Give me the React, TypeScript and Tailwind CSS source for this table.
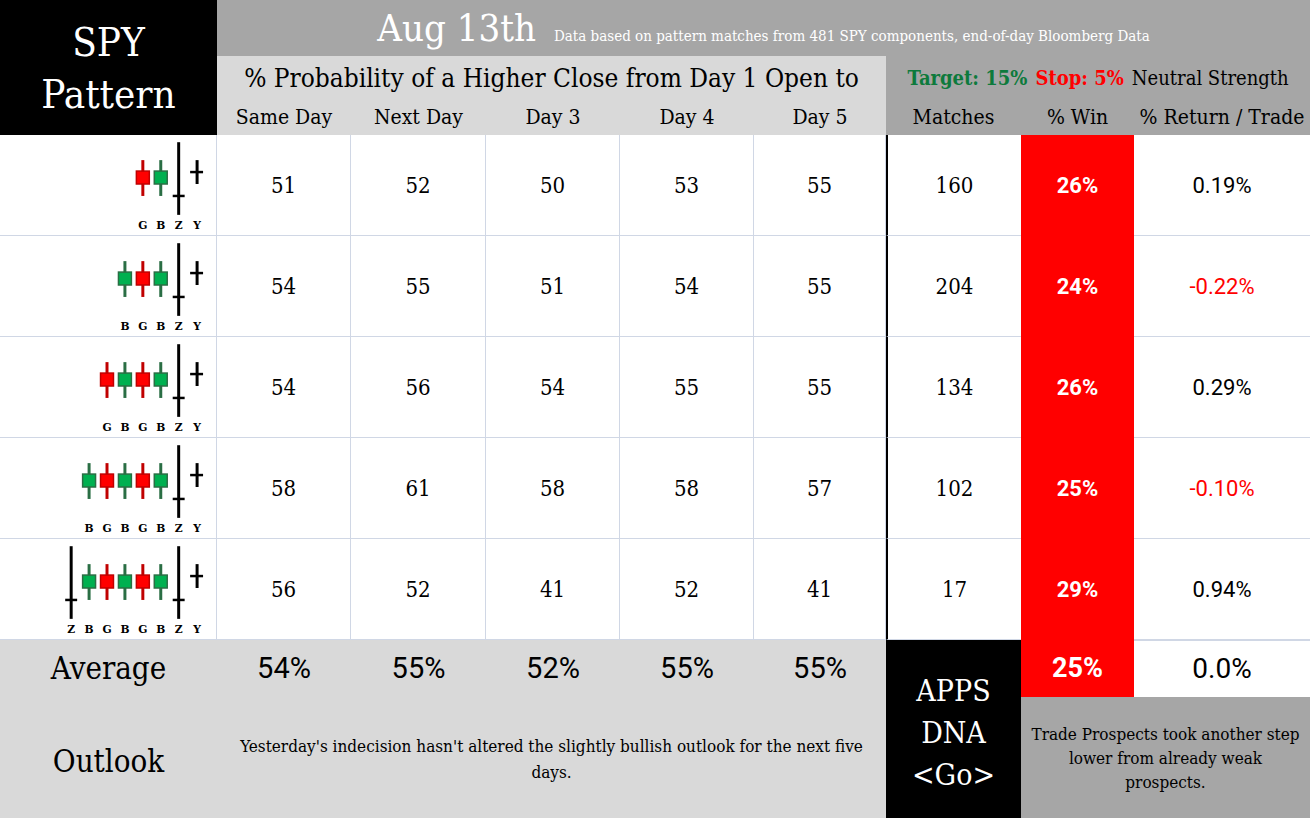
import React from 'react';

const SLAB = "font-['DejaVu_Serif_Condensed','DejaVu_Serif',serif]";
const SANS = "font-['Roboto','Liberation_Sans',sans-serif]";

type Row = {
  pattern: string;
  days: number[];
  matches: number;
  win: string;
  ret: string;
  neg?: boolean;
};

const rows: Row[] = [
  { pattern: 'GBZY', days: [51, 52, 50, 53, 55], matches: 160, win: '26%', ret: '0.19%' },
  { pattern: 'BGBZY', days: [54, 55, 51, 54, 55], matches: 204, win: '24%', ret: '-0.22%', neg: true },
  { pattern: 'GBGBZY', days: [54, 56, 54, 55, 55], matches: 134, win: '26%', ret: '0.29%' },
  { pattern: 'BGBGBZY', days: [58, 61, 58, 58, 57], matches: 102, win: '25%', ret: '-0.10%', neg: true },
  { pattern: 'ZBGBGBZY', days: [56, 52, 41, 52, 41], matches: 17, win: '29%', ret: '0.94%' },
];

const averages = ['54%', '55%', '52%', '55%', '55%'];
const dayHeaders = ['Same Day', 'Next Day', 'Day 3', 'Day 4', 'Day 5'];

// x centre of each glyph, counted from the right edge of the cell
function xsFor(pattern: string) {
  const n = pattern.length;
  return pattern.split('').map((_, i) => {
    const fromRight = n - 1 - i;
    if (fromRight === 0) return 198;
    return 179.5 - (fromRight - 1) * 18;
  });
}

function Candles({ pattern }: { pattern: string }) {
  const xs = xsFor(pattern);
  return (
    <svg width="217" height="101" viewBox="0 0 217 101">
      {pattern.split('').map((c, i) => {
        const x = xs[i];
        const isLast = i === pattern.length - 1;
        let shape;
        if (c === 'Y' && isLast) {
          shape = (
            <g stroke="#000" strokeWidth="3">
              <line x1={x} y1={25} x2={x} y2={49} />
              <line x1={x - 7} y1={37} x2={x + 6} y2={37} strokeWidth="2.5" />
            </g>
          );
        } else if (c === 'Z') {
          shape = (
            <g stroke="#000" strokeWidth="3">
              <line x1={x} y1={7} x2={x} y2={80} />
              <line x1={x - 6} y1={61} x2={x + 6} y2={61} strokeWidth="2.5" />
            </g>
          );
        } else {
          const red = c === 'G';
          const edge = red ? '#c00000' : '#2a6e44';
          const fill = red ? '#ff0000' : '#00b050';
          shape = (
            <g>
              <line x1={x} y1={25} x2={x} y2={61} stroke={edge} strokeWidth="3" />
              <rect x={x - 6.5} y={36} width={13} height={13} fill={fill} stroke={edge} strokeWidth="1.5" />
            </g>
          );
        }
        return (
          <g key={i}>
            {shape}
            <text
              x={x}
              y={94}
              textAnchor="middle"
              fontSize="12"
              fontWeight="700"
              fontFamily="'DejaVu Serif Condensed', 'DejaVu Serif', serif"
              fill="#000"
            >
              {c}
            </text>
          </g>
        );
      })}
    </svg>
  );
}

export default function App() {
  return (
    <div
      className={`${SLAB} w-[1310px] h-[818px] bg-white text-black grid grid-cols-[217px_134px_135px_134px_134px_132px_135px_113px_176px] grid-rows-[56px_44px_35px_101px_101px_101px_101px_101px_57px_121px] overflow-hidden`}
    >
      {/* title block */}
      <div className="row-span-3 bg-black text-white flex flex-col items-center justify-center text-[40px] leading-[52px]">
        <span>SPY</span>
        <span>Pattern</span>
      </div>

      <div className="col-span-8 bg-[#a6a6a6] text-white flex items-baseline justify-center gap-[18px] pb-1">
        <span className="text-[38px] font-light">Aug 13th</span>
        <span className="text-[15px]">
          Data based on pattern matches from 481 SPY components, end-of-day Bloomberg Data
        </span>
      </div>

      <div className="col-span-5 bg-[#d9d9d9] flex items-center justify-center text-[26px]">
        % Probability of a Higher Close from Day 1 Open to
      </div>
      <div className="col-span-3 bg-[#a6a6a6] flex items-center justify-center gap-2 text-[20px]">
        <span className="font-bold text-[#0d7a3c]">Target: 15%</span>
        <span className="font-bold text-[#ff0000]">Stop: 5%</span>
        <span>Neutral Strength</span>
      </div>

      {dayHeaders.map((h) => (
        <div key={h} className="bg-[#d9d9d9] flex items-center justify-center text-[21px]">
          {h}
        </div>
      ))}
      <div className="bg-[#a6a6a6] flex items-center justify-center text-[21px]">Matches</div>
      <div className="bg-[#a6a6a6] flex items-center justify-center text-[21px]">% Win</div>
      <div className="bg-[#a6a6a6] flex items-center justify-center text-[21px]">% Return / Trade</div>

      {/* data rows */}
      {rows.map((r, i) => (
        <React.Fragment key={i}>
          <div className="border-r border-b border-[#d0d7e5] flex justify-end overflow-hidden">
            <Candles pattern={r.pattern} />
          </div>
          {r.days.map((d, j) => (
            <div
              key={j}
              className="border-r border-b border-[#d0d7e5] flex items-center justify-center text-[22px]"
            >
              {d}
            </div>
          ))}
          <div className="border-l-2 border-l-black border-b border-[#d0d7e5] flex items-center justify-center text-[22px]">
            {r.matches}
          </div>
          <div className={`${SANS} bg-[#ff0000] text-white font-bold flex items-center justify-center text-[22px]`}>
            {r.win}
          </div>
          <div
            className={`${SANS} border-b border-[#d0d7e5] flex items-center justify-center text-[22px] ${r.neg ? 'text-[#ff0000]' : ''}`}
          >
            {r.ret}
          </div>
        </React.Fragment>
      ))}

      {/* averages */}
      <div className="bg-[#d9d9d9] flex items-center justify-center text-[31px]">Average</div>
      {averages.map((a, j) => (
        <div key={j} className={`${SANS} bg-[#d9d9d9] flex items-center justify-center text-[29px]`}>
          {a}
        </div>
      ))}
      <div className="row-span-2 bg-black text-white flex flex-col items-center justify-center text-[30px] leading-[42px] pt-2">
        <span>APPS</span>
        <span>DNA</span>
        <span>&lt;Go&gt;</span>
      </div>
      <div className={`${SANS} bg-[#ff0000] text-white font-bold flex items-center justify-center text-[27px]`}>
        25%
      </div>
      <div className={`${SANS} border-t border-[#d0d7e5] flex items-center justify-center text-[28px]`}>0.0%</div>

      {/* outlook */}
      <div className="bg-[#d9d9d9] flex items-center justify-center text-[31px] pt-2">Outlook</div>
      <div className="col-span-5 bg-[#d9d9d9] flex items-start justify-center text-center text-[17px] leading-[26px] px-3 pt-[36px]">
        Yesterday's indecision hasn't altered the slightly bullish outlook for the next five days.
      </div>
      <div className="col-span-2 bg-[#a6a6a6] flex items-center justify-center text-center text-[17px] leading-[24px] px-2">
        Trade Prospects took another step lower from already weak prospects.
      </div>
    </div>
  );
}
